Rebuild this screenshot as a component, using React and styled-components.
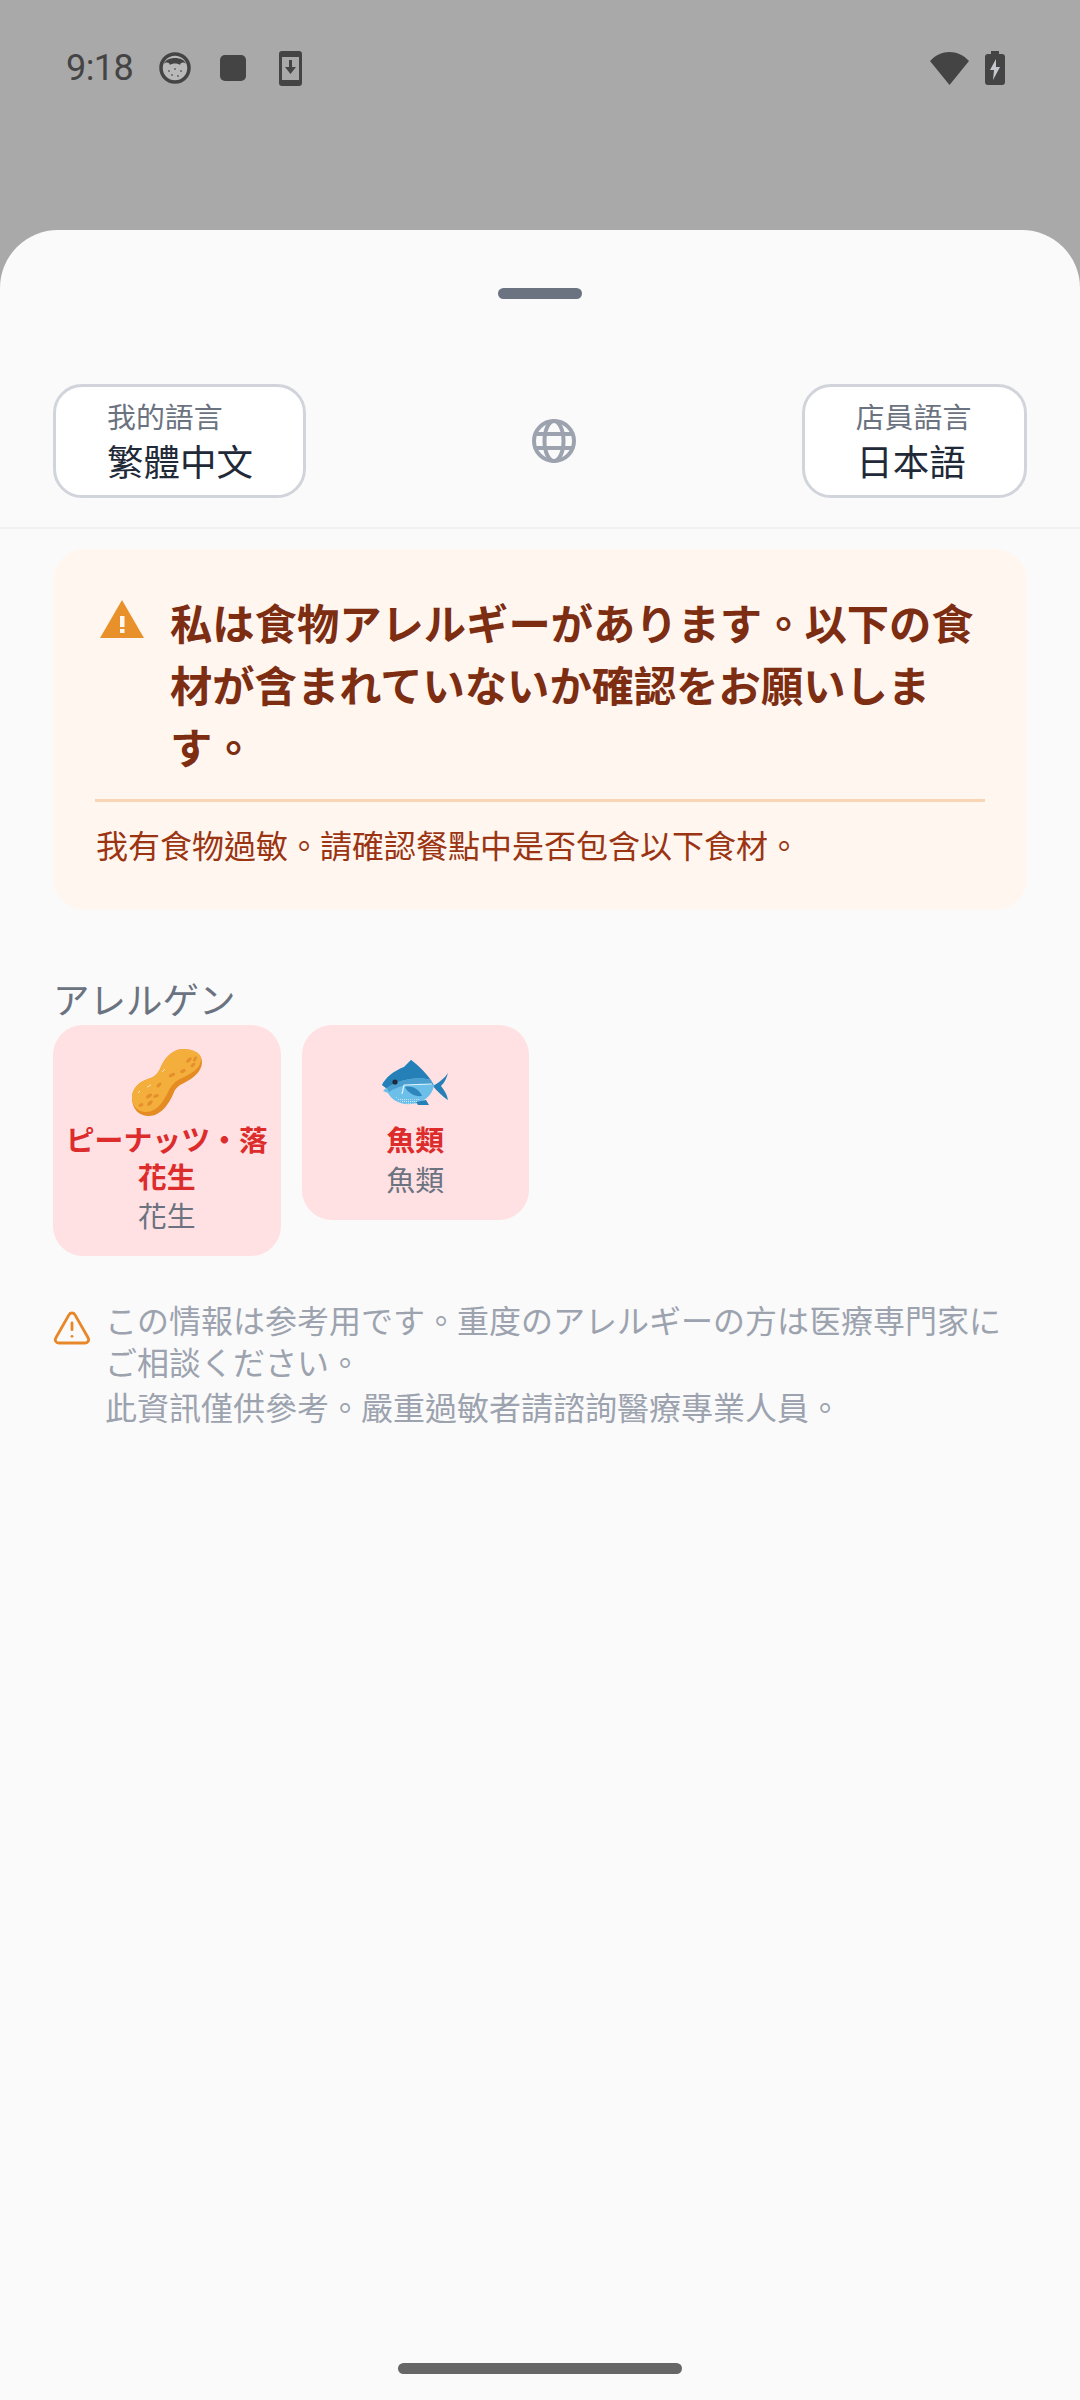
import React from "react";
import styled, { createGlobalStyle } from "styled-components";
import { TriangleAlert } from "lucide-react";

const GlobalStyle = createGlobalStyle`
  html, body {
    margin: 0;
    padding: 0;
    overflow: hidden;
    background: #a9a9a9;
  }
  * {
    box-sizing: border-box;
  }
`;

const Screen = styled.div`
  width: 1080px;
  height: 2400px;
  display: flex;
  flex-direction: column;
  background: #a9a9a9;
  font-family: "Noto Sans CJK TC", "Noto Sans CJK JP", "Noto Sans", sans-serif;
`;

const StatusBar = styled.header`
  height: 230px;
  flex: none;
  padding: 0 75px 94px 66px;
  display: flex;
  align-items: center;
  justify-content: space-between;
`;

const StatusGroup = styled.div`
  display: flex;
  align-items: center;
`;

const Clock = styled.span`
  font-family: Roboto, sans-serif;
  font-size: 36px;
  color: #444;
  margin-right: 25px;
  letter-spacing: -0.6px;
`;

const StatusIcon = styled.svg`
  display: block;
  flex: none;
  margin-left: ${(p) => p.$gap || 0}px;
`;

const Sheet = styled.main`
  flex: 1;
  display: flex;
  flex-direction: column;
  background: #fafafa;
  border-radius: 58px 58px 0 0;
  padding-top: 58px;
`;

const Handle = styled.div`
  width: 84px;
  height: 11px;
  border-radius: 6px;
  background: #6b7280;
  align-self: center;
  flex: none;
`;

const LanguageRow = styled.section`
  margin-top: 85px;
  padding: 0 53px 29px;
  display: flex;
  align-items: center;
  justify-content: space-between;
  border-bottom: 2px solid #f1f1f2;
`;

const LanguageButton = styled.div`
  height: 114px;
  width: ${(p) => p.$width}px;
  padding-top: 8px;
  display: flex;
  flex-direction: column;
  align-items: ${(p) => (p.$centered ? "center" : "flex-start")};
  padding-left: ${(p) => (p.$centered ? 0 : 51)}px;
  padding-right: ${(p) => (p.$centered ? 2 : 0)}px;
  background: #fff;
  border: 3px solid #d1d5db;
  border-radius: 29px;
`;

const LanguageLabel = styled.span`
  font-size: 28.9px;
  line-height: 41px;
  color: #6b7280;
`;

const LanguageValue = styled.span`
  font-size: 36.5px;
  line-height: 50px;
  color: #1f2937;
  margin-right: ${(p) => (p.$centered ? 5 : 0)}px;
`;

const NoticeCard = styled.section`
  margin: 20px 53px 0;
  padding: 42px 42px 42px;
  background: #fff6ef;
  border-radius: 32px;
`;

const NoticeHead = styled.div`
  display: flex;
  align-items: flex-start;
  gap: 26px;
  padding: 0 0 22px 5px;
  border-bottom: 3px solid #f8d6b5;
`;

const NoticeTitle = styled.h2`
  margin: 0;
  flex: 1;
  font-size: 42.3px;
  line-height: 62px;
  font-weight: 700;
  color: #7c2d12;
`;

const NoticeIcon = styled.svg`
  display: block;
  flex: none;
  margin-top: 9px;
`;

const NoticeText = styled.p`
  margin: 19px 0 0 1px;
  font-size: 32px;
  line-height: 47px;
  color: #9a3412;
`;

const SectionLabel = styled.h3`
  margin: 62px 53px 0;
  font-size: 36.5px;
  line-height: 53px;
  font-weight: 400;
  color: #6b7280;
`;

const AllergenGrid = styled.div`
  margin: 0 53px;
  display: grid;
  grid-template-columns: repeat(4, 227.5px);
  gap: 21px;
  align-items: start;
`;

const AllergenCard = styled.div`
  padding: 19px 10px 23px;
  display: flex;
  flex-direction: column;
  align-items: center;
  text-align: center;
  background: #ffe1e3;
  border-radius: 30px;
`;

const AllergenPicture = styled.div`
  height: 76px;
  display: flex;
  align-items: center;
  justify-content: center;
`;

const AllergenName = styled.div`
  font-size: 28.9px;
  line-height: 36.5px;
  font-weight: 700;
  color: #dc2c2c;
`;

const AllergenSub = styled.div`
  margin-top: 2px;
  font-size: 28.9px;
  line-height: 38px;
  color: #6b7280;
`;

const Disclaimer = styled.section`
  margin: 42px 53px 0;
  display: flex;
  align-items: flex-start;
  gap: 13px;
`;

const DisclaimerIcon = styled(TriangleAlert)`
  flex: none;
  margin: 10px 0 0 -1px;
  color: #e8872a;
`;

const DisclaimerText = styled.p`
  margin: 0 0 3px;
  font-size: 32px;
  line-height: 42px;
  color: #9ca3af;
`;

const HomeBar = styled.div`
  width: 284px;
  height: 11px;
  margin: auto auto 26px;
  border-radius: 6px;
  background: #666;
  flex: none;
`;

function FaceIcon() {
  return (
    <StatusIcon $gap={0} width="34" height="34" viewBox="0 0 34 34">
      <circle cx="17" cy="17" r="14" fill="#b9b9b9" stroke="#444" strokeWidth="3.5" />
      <path d="M6 13 C8 5 26 5 28 13 C26 11 23 11 22 14 C20 12 14 12 12 14 C11 11 8 11 6 13 Z" fill="#444" />
      <g fill="#666">
        <circle cx="11" cy="20" r="1" />
        <circle cx="17" cy="18" r="1" />
        <circle cx="23" cy="20" r="1" />
        <circle cx="14" cy="24" r="1" />
        <circle cx="20" cy="25" r="1" />
      </g>
    </StatusIcon>
  );
}

function StopIcon() {
  return (
    <StatusIcon $gap={28} width="26" height="26" viewBox="0 0 26 26">
      <rect width="26" height="26" rx="5" fill="#444" />
    </StatusIcon>
  );
}

function PhoneDownloadIcon() {
  return (
    <StatusIcon $gap={33} width="23" height="35" viewBox="0 0 23 35">
      <rect width="23" height="35" rx="3" fill="#444" />
      <rect x="3" y="6" width="17" height="23" fill="#a9a9a9" />
      <path d="M10 9 H13 V16 H17 L11.5 23 L6 16 H10 Z" fill="#444" />
    </StatusIcon>
  );
}

function WifiIcon() {
  return (
    <StatusIcon width="39" height="33" viewBox="0 0 39 33">
      <path d="M0 9 C11 -3 28 -3 39 9 L19.5 33 Z" fill="#444" />
    </StatusIcon>
  );
}

function BatteryIcon() {
  return (
    <StatusIcon $gap={16} width="20" height="34" viewBox="0 0 20 34">
      <path d="M6 0 H14 V3 H17 Q20 3 20 6 V31 Q20 34 17 34 H3 Q0 34 0 31 V6 Q0 3 3 3 H6 Z" fill="#444" />
      <path d="M11 8 L5 19 H9 L8 29 L15 16 H11 Z" fill="#c4c8ce" />
    </StatusIcon>
  );
}

function GlobeIcon() {
  return (
    <svg width="44" height="44" viewBox="0 0 44 44" fill="none" stroke="#9ca3af" strokeWidth="4">
      <circle cx="22" cy="22" r="20" />
      <ellipse cx="22" cy="22" rx="9.5" ry="20" />
      <path d="M4 15 H40 M4 29 H40" />
    </svg>
  );
}

function WarningIcon() {
  return (
    <NoticeIcon width="44" height="38" viewBox="0 0 44 38">
      <path d="M22 0 L44 38 H0 Z" fill="#e8912a" />
      <rect x="20" y="16" width="4.5" height="11" fill="#fff6ef" />
      <rect x="20" y="29" width="4.5" height="4" fill="#fff6ef" />
    </NoticeIcon>
  );
}

function PeanutPicture() {
  return (
    <svg width="70" height="67" viewBox="0 0 70 67">
      <path
        d="M50 0 C60 0 70 4 70 13 C70 23 60 30 52 34 C46 37 44 39 42 43 C37 56 28 67 17 67 C7 67 0 60 0 49 C0 39 7 33 16 30 C22 28 25 26 28 20 C32 10 39 1 50 0 Z"
        fill="#e48c23"
      />
      <path
        d="M50 0 C60 0 69 3 69 10 C69 19 59 25 50 29 C43 32 40 36 37 41 C32 52 25 63 14 63 C6 63 0 57 0 49 C0 39 7 33 16 30 C22 28 25 26 28 20 C32 10 39 1 50 0 Z"
        fill="#f4ae3c"
      />
      <g fill="#e58f2c">
        <ellipse cx="57" cy="11" rx="3.4" ry="1.6" transform="rotate(-45 57 11)" />
        <ellipse cx="63" cy="10" rx="3" ry="1.5" transform="rotate(-60 63 10)" />
        <ellipse cx="61" cy="16" rx="3" ry="1.5" transform="rotate(-40 61 16)" />
        <ellipse cx="51" cy="22" rx="3" ry="1.6" transform="rotate(-25 51 22)" />
        <ellipse cx="40" cy="26" rx="3.4" ry="1.7" transform="rotate(-25 40 26)" />
        <ellipse cx="27" cy="36" rx="3" ry="1.6" transform="rotate(-50 27 36)" />
        <ellipse cx="17" cy="47" rx="3.4" ry="1.7" transform="rotate(-35 17 47)" />
        <ellipse cx="24" cy="47" rx="3" ry="1.6" transform="rotate(-20 24 47)" />
        <ellipse cx="18" cy="54" rx="3.4" ry="1.7" transform="rotate(-45 18 54)" />
        <ellipse cx="9" cy="56" rx="2.6" ry="1.6" transform="rotate(-25 9 56)" />
      </g>
      <g stroke="#fbe3b3" strokeWidth="1" fill="none">
        <path d="M30 23 L33 20 M15 38 L19 36 M6 44 L8 42" />
      </g>
    </svg>
  );
}

function FishPicture() {
  return (
    <svg width="70" height="47" viewBox="0 0 70 47">
      <defs>
        <pattern id="fishDots" width="2" height="2" patternUnits="userSpaceOnUse">
          <rect width="1" height="1" fill="#cfeaf7" />
        </pattern>
      </defs>
      <path d="M53 27 C58 24 65 19 68 14 C66 21 64 24 61 27 C64 31 67 35 68 41 C63 38 57 32 53 27 Z" fill="#2580b8" />
      <path d="M2 26 C6 18 14 12 24 8 L31 1 C40 8 48 18 54 27 C52 36 44 44 32 45 C22 46 12 42 8 34 L3 32 L6 29 Z" fill="#6bbfe8" />
      <path d="M2 26 C6 18 14 12 24 8 L31 1 C40 8 46 14 51 21 C38 17 20 20 7 29 L6 29 Z" fill="#2580b8" />
      <path d="M7 29 C20 20 38 17 51 21 L54 26 C38 23 20 25 9 33 Z" fill="#4a9fd0" />
      <path d="M15 38 C22 40 32 41 40 40 L36 44 C28 46 20 44 15 38 Z" fill="url(#fishDots)" />
      <path d="M24 26 L52 25 M24 26 L22 35" stroke="#dff2fb" strokeWidth="1.2" fill="none" />
      <path d="M25 28 C33 26 40 32 42 37 C35 38 28 34 25 28 Z" fill="#2f86bc" />
      <path d="M36 43 L46 41 L49 46 L38 46 Z" fill="#2580b8" />
      <circle cx="15" cy="23" r="2.6" fill="#1f2937" />
    </svg>
  );
}

const allergens = [
  { id: "peanut", name: "ピーナッツ・落花生", sub: "花生", Picture: PeanutPicture },
  { id: "fish", name: "魚類", sub: "魚類", Picture: FishPicture },
];

export default function App() {
  return (
    <Screen>
      <GlobalStyle />
      <StatusBar>
        <StatusGroup>
          <Clock>9:18</Clock>
          <FaceIcon />
          <StopIcon />
          <PhoneDownloadIcon />
        </StatusGroup>
        <StatusGroup>
          <WifiIcon />
          <BatteryIcon />
        </StatusGroup>
      </StatusBar>

      <Sheet>
        <Handle />

        <LanguageRow>
          <LanguageButton $width={253}>
            <LanguageLabel>我的語言</LanguageLabel>
            <LanguageValue>繁體中文</LanguageValue>
          </LanguageButton>
          <GlobeIcon />
          <LanguageButton $width={225} $centered>
            <LanguageLabel>店員語言</LanguageLabel>
            <LanguageValue $centered>日本語</LanguageValue>
          </LanguageButton>
        </LanguageRow>

        <NoticeCard>
          <NoticeHead>
            <WarningIcon />
            <NoticeTitle>
              私は食物アレルギーがあります。以下の食材が含まれていないか確認をお願いします。
            </NoticeTitle>
          </NoticeHead>
          <NoticeText>我有食物過敏。請確認餐點中是否包含以下食材。</NoticeText>
        </NoticeCard>

        <SectionLabel>アレルゲン</SectionLabel>
        <AllergenGrid>
          {allergens.map(({ id, name, sub, Picture }) => (
            <AllergenCard key={id}>
              <AllergenPicture>
                <Picture />
              </AllergenPicture>
              <AllergenName>{name}</AllergenName>
              <AllergenSub>{sub}</AllergenSub>
            </AllergenCard>
          ))}
        </AllergenGrid>

        <Disclaimer>
          <DisclaimerIcon size={40} strokeWidth={1.7} />
          <div>
            <DisclaimerText>
              この情報は参考用です。重度のアレルギーの方は医療専門家にご相談ください。
            </DisclaimerText>
            <DisclaimerText>此資訊僅供參考。嚴重過敏者請諮詢醫療專業人員。</DisclaimerText>
          </div>
        </Disclaimer>

        <HomeBar />
      </Sheet>
    </Screen>
  );
}
